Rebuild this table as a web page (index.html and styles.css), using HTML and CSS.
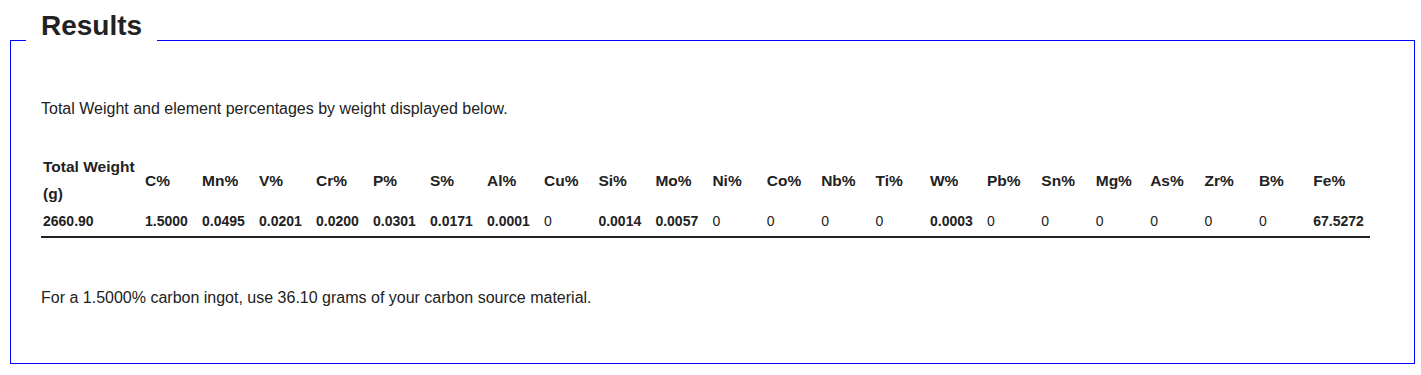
FILE: index.html
```html
<!DOCTYPE html>
<html lang="en">
<head>
<meta charset="utf-8">
<title>Results</title>
<link rel="stylesheet" href="styles.css">
</head>
<body>
<fieldset class="results">
  <legend class="results-title">Results</legend>
  <div class="results-body">
    <p class="intro">Total Weight and element percentages by weight displayed below.</p>
    <table class="composition">
      <thead>
        <tr>
          <th class="col-total">Total Weight (g)</th>
          <th class="col-val">C%</th>
          <th class="col-val">Mn%</th>
          <th class="col-val">V%</th>
          <th class="col-val">Cr%</th>
          <th class="col-val">P%</th>
          <th class="col-val">S%</th>
          <th class="col-val">Al%</th>
          <th class="col-zero">Cu%</th>
          <th class="col-val">Si%</th>
          <th class="col-val">Mo%</th>
          <th class="col-zero">Ni%</th>
          <th class="col-zero">Co%</th>
          <th class="col-zero">Nb%</th>
          <th class="col-zero">Ti%</th>
          <th class="col-val">W%</th>
          <th class="col-zero">Pb%</th>
          <th class="col-zero">Sn%</th>
          <th class="col-zero">Mg%</th>
          <th class="col-zero">As%</th>
          <th class="col-zero">Zr%</th>
          <th class="col-zero">B%</th>
          <th class="col-fe">Fe%</th>
        </tr>
      </thead>
      <tbody>
        <tr>
          <td class="num">2660.90</td>
          <td class="num">1.5000</td>
          <td class="num">0.0495</td>
          <td class="num">0.0201</td>
          <td class="num">0.0200</td>
          <td class="num">0.0301</td>
          <td class="num">0.0171</td>
          <td class="num">0.0001</td>
          <td>0</td>
          <td class="num">0.0014</td>
          <td class="num">0.0057</td>
          <td>0</td>
          <td>0</td>
          <td>0</td>
          <td>0</td>
          <td class="num">0.0003</td>
          <td>0</td>
          <td>0</td>
          <td>0</td>
          <td>0</td>
          <td>0</td>
          <td>0</td>
          <td class="num">67.5272</td>
        </tr>
      </tbody>
    </table>
    <p class="note">For a 1.5000% carbon ingot, use 36.10 grams of your carbon source material.</p>
  </div>
</fieldset>
</body>
</html>
```

FILE: styles.css
```css
html, body {
  margin: 0;
  padding: 0;
  background: #ffffff;
}

body {
  font-family: "Liberation Sans", Arial, sans-serif;
  font-size: 16px;
  line-height: 1.8;
  color: #222222;
}

.results {
  margin: 9px 6px 0 10px;
  padding: 0 15px;
  border: 1px solid #0000ff;
  min-width: 0;
}

.results-title {
  padding: 0 15px 30px;
  font-size: 28px;
  font-weight: 700;
  line-height: 1.2;
  color: #222222;
}

.results-body {
  padding: 22px 15px 51px;
}

.intro {
  margin: 0 0 29px;
}

.note {
  margin: 46px 0 0;
}

.composition {
  border-collapse: separate;
  border-spacing: 0;
  border-bottom: 2px solid #222222;
}

.composition th,
.composition td {
  box-sizing: border-box;
  padding: 1px 2px;
  text-align: left;
}

.composition th {
  font-size: 15.5px;
  line-height: 27px;
  font-weight: 700;
  vertical-align: middle;
}

.composition td {
  font-size: 14px;
  font-weight: 400;
}

.composition td.num {
  font-weight: 700;
}

.col-total { width: 102px; }
.col-val   { width: 57px; }
.col-zero  { width: 54.4px; }
.col-fe    { width: 59px; }
```
